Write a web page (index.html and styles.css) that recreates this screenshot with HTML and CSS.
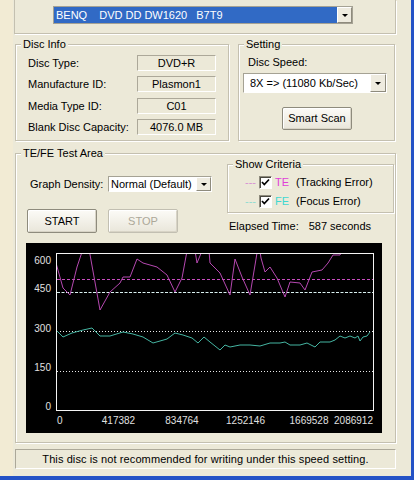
FILE: index.html
```html
<!DOCTYPE html>
<html>
<head>
<meta charset="utf-8">
<link rel="stylesheet" href="styles.css">
</head>
<body>
<div class="screen">
  <div class="upper">
    <div class="lstrip"></div>
    <div class="main">
      <div class="drivebox">
        <div class="combo drive">
          <div class="combo-field"><span class="d1">BENQ</span><span class="d2">DVD DD DW1620</span><span>B7T9</span></div>
          <div class="combo-btn"><i class="tri"></i></div>
        </div>
      </div>

      <div class="row1">
        <div class="group disc">
          <div class="gtitle">Disc Info</div>
          <div class="kv">
            <span class="k">Disc Type:</span><span class="v">DVD+R</span>
            <span class="k">Manufacture ID:</span><span class="v">Plasmon1</span>
            <span class="k">Media Type ID:</span><span class="v">C01</span>
            <span class="k">Blank Disc Capacity:</span><span class="v">4076.0 MB</span>
          </div>
        </div>
        <div class="group setting">
          <div class="gtitle">Setting</div>
          <div class="speed-lbl">Disc Speed:</div>
          <div class="combo speed">
            <div class="combo-field">8X =&gt; (11080 Kb/Sec)</div>
            <div class="combo-btn"><i class="tri"></i></div>
          </div>
          <button class="btn smart">Smart Scan</button>
        </div>
      </div>

      <div class="group tefe">
        <div class="gtitle">TE/FE Test Area</div>
        <div class="tefe-top">
          <div class="tcol">
            <div class="density">
              <span class="dlbl">Graph Density:</span>
              <div class="combo dens">
                <div class="combo-field">Normal (Default)</div>
                <div class="combo-btn"><i class="tri"></i></div>
              </div>
            </div>
            <div class="buttons">
              <button class="btn act">START</button>
              <button class="btn act disabled">STOP</button>
            </div>
          </div>
          <div class="tcol">
            <div class="group criteria">
              <div class="gtitle">Show Criteria</div>
              <div class="crit-row first">
                <span class="dash te-d">---</span>
                <span class="cb"><svg width="11" height="11" viewBox="0 0 11 11"><polyline points="2,5 4.3,7.5 9,2.5" fill="none" stroke="#000" stroke-width="1.7"/></svg></span>
                <span class="code te">TE</span>
                <span class="desc">(Tracking Error)</span>
              </div>
              <div class="crit-row">
                <span class="dash fe-d">---</span>
                <span class="cb"><svg width="11" height="11" viewBox="0 0 11 11"><polyline points="2,5 4.3,7.5 9,2.5" fill="none" stroke="#000" stroke-width="1.7"/></svg></span>
                <span class="code fe">FE</span>
                <span class="desc">(Focus Error)</span>
              </div>
            </div>
            <div class="elapsed"><span>Elapsed Time:</span><span class="secs">587 seconds</span></div>
          </div>
        </div>
        <div class="graph">
          <svg width="356" height="190" viewBox="0 0 356 190">
            <defs>
              <clipPath id="pc"><rect x="31" y="11" width="316" height="156"/></clipPath>
            </defs>
            <g stroke-width="1" fill="none">
              <line x1="31" y1="128.5" x2="347" y2="128.5" stroke="#E8E8E8" stroke-dasharray="1 2"/>
              <line x1="31" y1="88.5" x2="347" y2="88.5" stroke="#E8E8E8" stroke-dasharray="1 2"/>
              <line x1="31" y1="49.5" x2="347" y2="49.5" stroke="#D8F0F0" stroke-dasharray="3 1.5"/>
              <line x1="31" y1="36.5" x2="347" y2="36.5" stroke="#C84CC0" stroke-dasharray="3 2"/>
              <g clip-path="url(#pc)">
                <polyline stroke="#B548B0" points="30,20 37,45 44,52 51,24 57,6 59,-10 61,-10 63,6 74,67 84,49 94,40 97,34 104,34 111,16 117,20 131,24 141,32 149,49 156,35 161,8 163,-5 167,-5 171,20 176,8 178,-5 182,-5 184,20 194,30 204,52 209,16 216,34 224,52 231,10 233,2 235,15 239,29 244,24 251,35 259,54 264,39 274,40 279,47 286,29 296,27 302,20 307,12 314,12 316,8 320,-5"/>
                <polyline stroke="#45B5A2" points="30,87 37,94 46,90 57,87 66,85 74,93 84,93 97,89 107,91 117,94 127,100 134,98 141,96 149,90 157,92 166,95 172,100 178,94 184,99 194,107 199,102 204,104 214,102 224,102 234,103 244,100 254,100 259,99 264,102 274,102 281,100 289,104 294,99 304,99 309,97 314,93 319,95 324,93 329,95 332,93 334,98 337,94 341,93 344,89"/>
              </g>
              <rect x="30.5" y="10.5" width="317" height="157" stroke="#F4F4F4"/>
            </g>
            <g class="axis" fill="#E0E0E0" font-size="10">
              <text x="25" y="21" text-anchor="end">600</text>
              <text x="25" y="49" text-anchor="end">450</text>
              <text x="25" y="89" text-anchor="end">300</text>
              <text x="25" y="128" text-anchor="end">150</text>
              <text x="25" y="167" text-anchor="end">0</text>
              <text x="31" y="181">0</text>
              <text x="92.5" y="181" text-anchor="middle">417382</text>
              <text x="156" y="181" text-anchor="middle">834764</text>
              <text x="219.5" y="181" text-anchor="middle">1252146</text>
              <text x="283" y="181" text-anchor="middle">1669528</text>
              <text x="347" y="181" text-anchor="end">2086912</text>
            </g>
          </svg>
        </div>
      </div>

      <div class="status">This disc is not recommended for writing under this speed setting.</div>
    </div>
    <div class="rstrip"></div>
  </div>
  <div class="bstrip"></div>
</div>
</body>
</html>
```

FILE: styles.css
```css
* { box-sizing: border-box; }
html, body { margin: 0; padding: 0; }
body {
  width: 414px;
  height: 480px;
  overflow: hidden;
  font: 11px/13px "Liberation Sans", Arial, sans-serif;
  color: #000;
  background: #ECE9D8;
}
.screen { width: 414px; height: 480px; display: flex; flex-direction: column; }
.upper { flex: 1; display: flex; min-height: 0; }
.lstrip { width: 13px; background: #F2EBD4; }
.main { flex: 1; background: #ECE9D8; }
.rstrip { width: 3px; background: #2452C6; }
.bstrip { height: 4px; background: #2452C6; }

/* etched group boxes */
.group {
  border: 1px solid #C4C0B0;
  box-shadow: inset 1px 1px 0 #FFFFFF, 1px 1px 0 #FFFFFF;
}
.gtitle {
  width: max-content;
  margin: -7px 0 0 5px;
  padding: 0 2px;
  line-height: 13px;
  background: #ECE9D8;
}

.drivebox {
  margin-left: 1px;
  width: 382px;
  height: 34px;
  border: 1px solid #C4C0B0;
  border-top: 0;
  box-shadow: 1px 1px 0 #FFFFFF;
  padding: 6px 0 0 38px;
}

/* combo boxes */
.combo {
  display: flex;
  border: 1px solid;
  border-color: #A5A294 #FFFFFF #FFFFFF #A5A294;
  background: #FFFFFF;
}
.combo-field {
  flex: 1;
  white-space: nowrap;
  overflow: hidden;
}
.combo-btn {
  width: 16px;
  background: #EEEBDF;
  border: 1px solid;
  border-color: #FFFFFF #8E8B7D #8E8B7D #FFFFFF;
  display: flex;
  align-items: center;
  justify-content: center;
}
.tri {
  width: 0;
  height: 0;
  border-left: 3px solid transparent;
  border-right: 3px solid transparent;
  border-top: 3px solid #000;
}
.drive { width: 300px; height: 18px; border-color: #A5A294; }
.drive .combo-field {
  background: #316AC5;
  color: #FFFFFF;
  padding-left: 2px;
  line-height: 16px;
}
.drive .combo-btn { width: 15px; }
.d1 { margin-right: 12px; }
.d2 { margin-right: 9px; }

.row1 { display: flex; gap: 9px; margin-top: 10px; padding-left: 2px; }
.disc { width: 214px; height: 97px; }
.setting { width: 157px; height: 97px; }

.kv {
  display: grid;
  grid-template-columns: 109px 79px;
  grid-auto-rows: 16px;
  row-gap: 5.33px;
  margin-top: 4px;
  padding-left: 12px;
}
.k { line-height: 16px; }
.v {
  border: 1px solid;
  border-color: #ACA899 #FFFFFF #FFFFFF #ACA899;
  text-align: center;
  line-height: 14px;
}

.speed-lbl { margin: 4px 0 0 9px; line-height: 14px; }
.speed { width: 144px; height: 20px; margin: 4px 0 0 4px; }
.speed .combo-field { padding-left: 6px; line-height: 18px; }

.btn {
  font: inherit;
  color: #000;
  padding: 0;
  border: 1px solid #8E8B7D;
  border-radius: 2px;
  background: linear-gradient(#FCFBF7, #E9E6DA);
  box-shadow: inset 1px 1px 0 #FFFFFF, inset -1px -1px 0 #D8D4C6;
}
.smart { display: block; width: 70px; height: 23px; margin: 14px 0 0 43px; }

.tefe { margin: 12px 0 0 2px; width: 381px; height: 290px; }
.tefe-top { display: grid; grid-template-columns: 211px 168px; }
.density { display: flex; align-items: center; margin-top: 16px; padding-left: 14px; }
.dlbl { width: 78px; }
.dens { width: 104px; height: 16px; }
.dens .combo-field { padding-left: 2px; line-height: 14px; }
.dens .combo-btn { width: 15px; }
.buttons { display: flex; gap: 11px; margin-top: 17px; padding-left: 11px; }
.act { width: 70px; height: 24px; }
.disabled { color: #ACA899; border-color: #C2BFB2; }

.criteria { margin-top: 4px; width: 167px; height: 49px; }
.crit-row { display: flex; align-items: center; height: 13px; padding-left: 17px; margin-top: 6px; }
.crit-row.first { margin-top: 5px; }
.dash { width: 11px; line-height: 13px; }
.te-d { color: #D890D4; }
.fe-d { color: #8FDCD2; }
.cb {
  margin-left: 3px;
  width: 13px;
  height: 13px;
  background: #FFFFFF;
  border: 1px solid;
  border-color: #8E8B7D #FFFFFF #FFFFFF #8E8B7D;
  box-shadow: inset 1px 1px 0 #4A4840;
  display: flex;
}
.code { margin-left: 3px; width: 14px; }
.te { color: #E040D8; }
.fe { color: #40D8D0; }
.desc { margin-left: 7px; }

.elapsed { margin-top: 7px; padding-left: 2px; line-height: 13px; }
.secs { margin-left: 10px; }

.graph { margin: 10px 0 0 10px; width: 356px; height: 190px; background: #000; }
.graph svg { display: block; }
.axis { font-family: "Liberation Sans", Arial, sans-serif; }

.status {
  margin: 6px 0 0 2px;
  width: 381px;
  height: 20px;
  border: 1px solid;
  border-color: #ACA899 #FFFFFF #FFFFFF #ACA899;
  text-align: center;
  line-height: 18px;
  letter-spacing: 0.1px;
}
```
